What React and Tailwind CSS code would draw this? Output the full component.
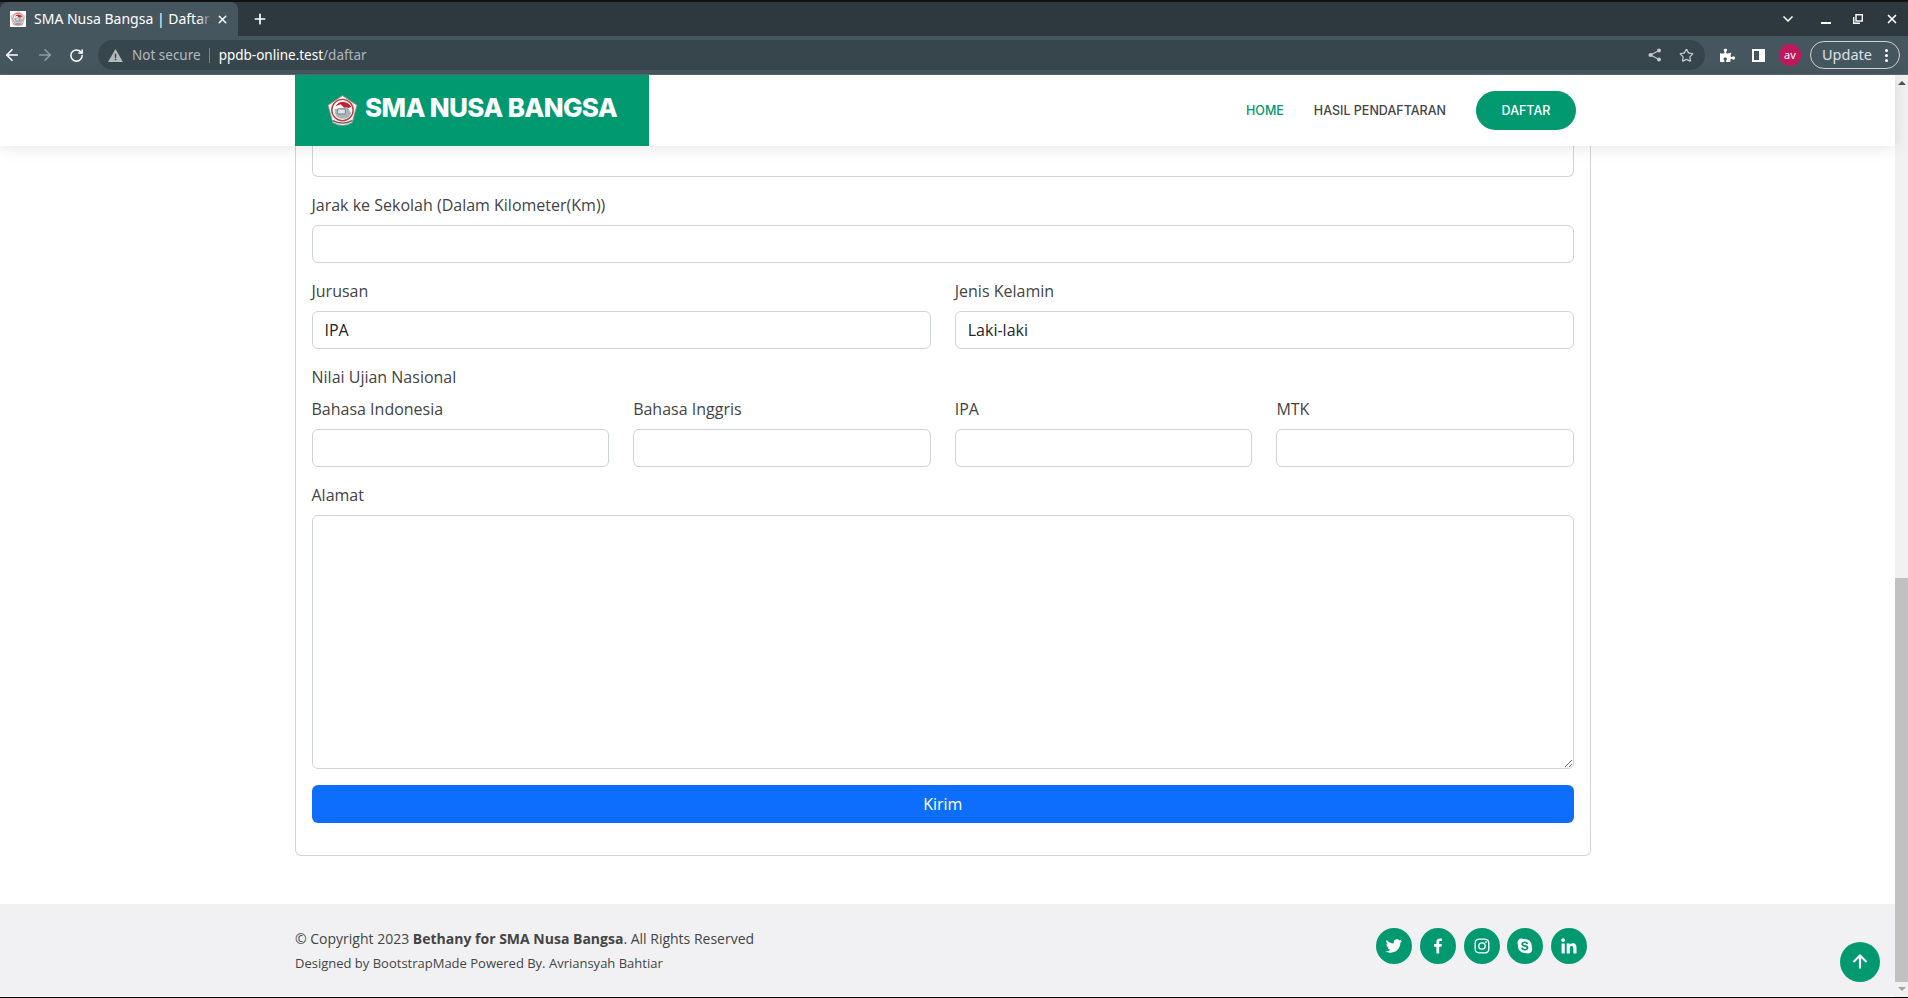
import React from "react";
import { ArrowLeft, ArrowRight, RotateCw, Star, ChevronDown, X, Plus } from "lucide-react";
import { FaPuzzlePiece } from "react-icons/fa";
import { BiLogoTwitter, BiLogoFacebook, BiLogoInstagram, BiLogoSkype, BiLogoLinkedin, BiUpArrowAlt } from "react-icons/bi";

function Emblem({ className }) {
  return (
    <svg viewBox="0 0 34 34" className={className}>
      <path d="M17 1 L32 11 L27 29 Q17 35 7 29 L2 11 Z" fill="#f3f1ee" stroke="#8a8a8a" strokeWidth="1" />
      <circle cx="17" cy="16" r="11" fill="#fff" stroke="#b8413f" strokeWidth="1.5" />
      <path d="M10 12 A9 9 0 0 1 26 13 L20 15 L15 10 Z" fill="#cc1f2d" />
      <path d="M9 15 L22 13 L26 19 A9 9 0 0 1 9 19 Z" fill="#a9b4bb" />
      <path d="M12 15 h8 v5 h-8 Z" fill="#dfe5e8" stroke="#5c6b73" strokeWidth=".7" />
      <path d="M7 27 Q17 32 27 27" fill="none" stroke="#666" strokeWidth="1.5" />
    </svg>
  );
}

function Field({ label, value, className = "" }) {
  return (
    <div className={className}>
      <label className="block mb-2 text-base leading-6">{label}</label>
      <input
        readOnly
        defaultValue={value}
        className="block w-full h-[38px] px-3 text-base text-[#212529] bg-white border border-[#ced4da] rounded-md outline-none"
      />
    </div>
  );
}

function BrowserChrome() {
  return (
    <div className="shrink-0 font-['Noto_Sans',sans-serif]">
      <div className="h-[2px] bg-[#111]" />
      {/* tab strip */}
      <div className="h-[34px] bg-[#2e393f] flex items-end text-white">
        <div className="relative w-[238px] h-[34px] bg-[#46565f] rounded-t-lg flex items-center pl-[10px] overflow-hidden">
          <Emblem className="w-4 h-4 bg-white shrink-0" />
          <span className="ml-[8px] mb-[2px] text-[14px] whitespace-nowrap">SMA Nusa Bangsa | Daftar</span>
          <div className="absolute right-0 top-0 h-full w-[26px] bg-[#46565f] flex items-center justify-end pr-[9px]">
            <X size={13} strokeWidth={2.5} />
          </div>
          <div className="absolute right-[26px] top-0 h-full w-[14px] bg-gradient-to-r from-transparent to-[#46565f]" />
        </div>
        <div className="h-[34px] ml-[14px] flex items-center">
          <Plus size={16} strokeWidth={2.5} />
        </div>
        <div className="flex-1 h-[34px] flex items-center justify-end pr-[9px]">
          <ChevronDown size={16} strokeWidth={2.5} className="mr-[25px]" />
          <div className="w-[10px] h-[2px] bg-white mt-[7px] mr-[22px]" />
          <svg viewBox="0 0 10 10" className="w-[10px] h-[10px] mr-[22px]" fill="none" stroke="#fff">
            <rect x="3" y=".7" width="6.3" height="6.3" strokeWidth="1.4" />
            <path d="M.7 3 V9.3 H7" strokeWidth="1.4" />
          </svg>
          <X size={14} strokeWidth={3} />
        </div>
      </div>
      {/* toolbar */}
      <div className="h-[39px] bg-[#46565f] flex items-center text-white border-b border-[#5a6870]">
        <ArrowLeft size={18} strokeWidth={2.2} className="ml-[3px]" />
        <ArrowRight size={18} strokeWidth={2.2} className="ml-[15px] text-[#8f9aa0]" />
        <RotateCw size={15} strokeWidth={2.4} className="ml-[14.5px]" />
        <div className="ml-[14.5px] w-[1607px] h-[30px] bg-[#37454d] rounded-full flex items-center pl-[10px] text-[13.5px]">
          <svg viewBox="0 0 16 14" className="w-[15px] h-[13px]" fill="#b4bbbf">
            <path d="M8 0 L16 14 H0 Z" />
            <rect x="7.2" y="5" width="1.6" height="4.5" fill="#37454d" />
            <rect x="7.2" y="10.5" width="1.6" height="1.6" fill="#37454d" />
          </svg>
          <span className="ml-[9px] text-[#b4bbbf]">Not secure</span>
          <span className="ml-[8px] w-px h-[15px] bg-[#76838a]" />
          <span className="ml-[9px]">ppdb-online.test<span className="text-[#aeb6ba]">/daftar</span></span>
          <svg viewBox="0 0 14 14" className="ml-auto w-[14px] h-[14px] text-[#c4cacd]" fill="currentColor" stroke="currentColor">
            <circle cx="11" cy="2.5" r="2" stroke="none" />
            <circle cx="11" cy="11.5" r="2" stroke="none" />
            <circle cx="2.5" cy="7" r="2" stroke="none" />
            <path d="M11 2.5 L2.5 7 L11 11.5" fill="none" strokeWidth="1.2" />
          </svg>
          <Star size={15} strokeWidth={2} className="ml-[17px] mr-[11px] text-[#c4cacd]" />
        </div>
        <FaPuzzlePiece size={15} className="ml-[15px]" />
        <div className="ml-[17px] w-[13px] h-[13px] border-[2px] border-r-[6px] border-white" />
        <div className="ml-[14px] w-[22px] h-[22px] rounded-full bg-[#c2185b] flex items-center justify-center text-[11px]">av</div>
        <div className="ml-[9px] w-[90px] h-[28px] rounded-full border border-[#d8cfcb] flex items-center pl-[11px] text-[14.5px] text-[#dde1e3]">
          Update
          <span className="ml-[13px] flex flex-col gap-[2px]">
            <span className="w-[3px] h-[3px] bg-white rounded-full" />
            <span className="w-[3px] h-[3px] bg-white rounded-full" />
            <span className="w-[3px] h-[3px] bg-white rounded-full" />
          </span>
        </div>
      </div>
    </div>
  );
}

function Header() {
  return (
    <header className="relative z-10 h-[71px] shrink-0 bg-white shadow-[0_2px_15px_rgba(0,0,0,0.1)] flex pl-[295px] pr-[319px] font-['Inter',sans-serif]">
      <div className="w-[354px] h-full bg-[#009970] flex items-center pl-[31px]">
        <Emblem className="w-[33px] h-[34px]" />
        <span className="ml-[6px] mb-[7px] text-[26px] font-extrabold text-white tracking-tight whitespace-nowrap">SMA NUSA BANGSA</span>
      </div>
      <nav className="ml-auto flex items-center text-[12.5px] font-medium whitespace-nowrap">
        <a href="#" className="mt-[2px] text-[#009970]">HOME</a>
        <a href="#" className="ml-[30px] mt-[2px] text-[#444444]">HASIL PENDAFTARAN</a>
        <a href="#" className="ml-[30px] w-[100px] h-[39px] pt-[2px] rounded-full bg-[#009970] text-white flex items-center justify-center">DAFTAR</a>
      </nav>
    </header>
  );
}

function Form() {
  return (
    <div className="ml-[294.5px] w-[1296.5px] px-4 pb-[32px] bg-white border border-t-0 border-[#d3d4d6] rounded-b-md">
      <input readOnly className="block w-full h-[31px] mb-4 bg-white border border-t-0 border-[#ced4da] rounded-b-md outline-none" />
      <Field label="Jarak ke Sekolah (Dalam Kilometer(Km))" className="mb-4" />
      <div className="grid grid-cols-2 gap-x-6 mb-4">
        <Field label="Jurusan" value="IPA" />
        <Field label="Jenis Kelamin" value="Laki-laki" />
      </div>
      <div className="mb-2 leading-6">Nilai Ujian Nasional</div>
      <div className="grid grid-cols-4 gap-x-6 mb-4">
        <Field label="Bahasa Indonesia" />
        <Field label="Bahasa Inggris" />
        <Field label="IPA" />
        <Field label="MTK" />
      </div>
      <label className="block mb-2 leading-6">Alamat</label>
      <textarea readOnly className="block w-full h-[254px] mb-4 bg-white border border-[#ced4da] rounded-md outline-none" />
      <button className="block w-full h-[38px] bg-[#0d6efd] text-white text-base rounded-md">Kirim</button>
    </div>
  );
}

function Footer() {
  const icons = [BiLogoTwitter, BiLogoFacebook, BiLogoInstagram, BiLogoSkype, BiLogoLinkedin];
  return (
    <footer className="mt-12 h-[92px] bg-[#f1f1f3] flex items-start pl-[295px] pr-[308px] pt-6">
      <div>
        <div className="text-sm leading-[21px]">
          © Copyright 2023 <strong className="font-bold">Bethany for SMA Nusa Bangsa</strong>. All Rights Reserved
        </div>
        <div className="text-[13px] leading-5 mt-1">Designed by BootstrapMade Powered By. Avriansyah Bahtiar</div>
      </div>
      <div className="ml-auto flex gap-[7.75px]">
        {icons.map((Icon, i) => (
          <a key={i} href="#" className="w-[36px] h-[36px] rounded-full bg-[#009970] text-white flex items-center justify-center">
            <Icon size={20} />
          </a>
        ))}
      </div>
    </footer>
  );
}

function Scrollbar() {
  return (
    <div className="w-[13px] shrink-0 bg-[#f1f1f1] flex flex-col items-center">
      <div className="mt-[6px] border-x-[4px] border-x-transparent border-b-[4px] border-b-[#505050]" />
      <div className="mt-[493px] w-full h-[404px] bg-[#c1c1c1]" />
      <div className="mt-[5px] border-x-[4px] border-x-transparent border-t-[4px] border-t-[#a3a3a3]" />
    </div>
  );
}

export default function App() {
  return (
    <div className="relative h-screen flex flex-col overflow-hidden bg-white text-[#444444] font-['Open_Sans',sans-serif]">
      <BrowserChrome />
      <div className="flex-1 min-h-0 flex">
        <div className="flex-1 min-w-0 flex flex-col">
          <Header />
          <Form />
          <Footer />
        </div>
        <Scrollbar />
      </div>
      <div className="h-px bg-black shrink-0" />
      {/* back to top */}
      <a href="#" className="absolute left-[1840px] top-[942px] w-10 h-10 rounded-full bg-[#009970] text-white flex items-center justify-center">
        <BiUpArrowAlt size={26} />
      </a>
    </div>
  );
}
